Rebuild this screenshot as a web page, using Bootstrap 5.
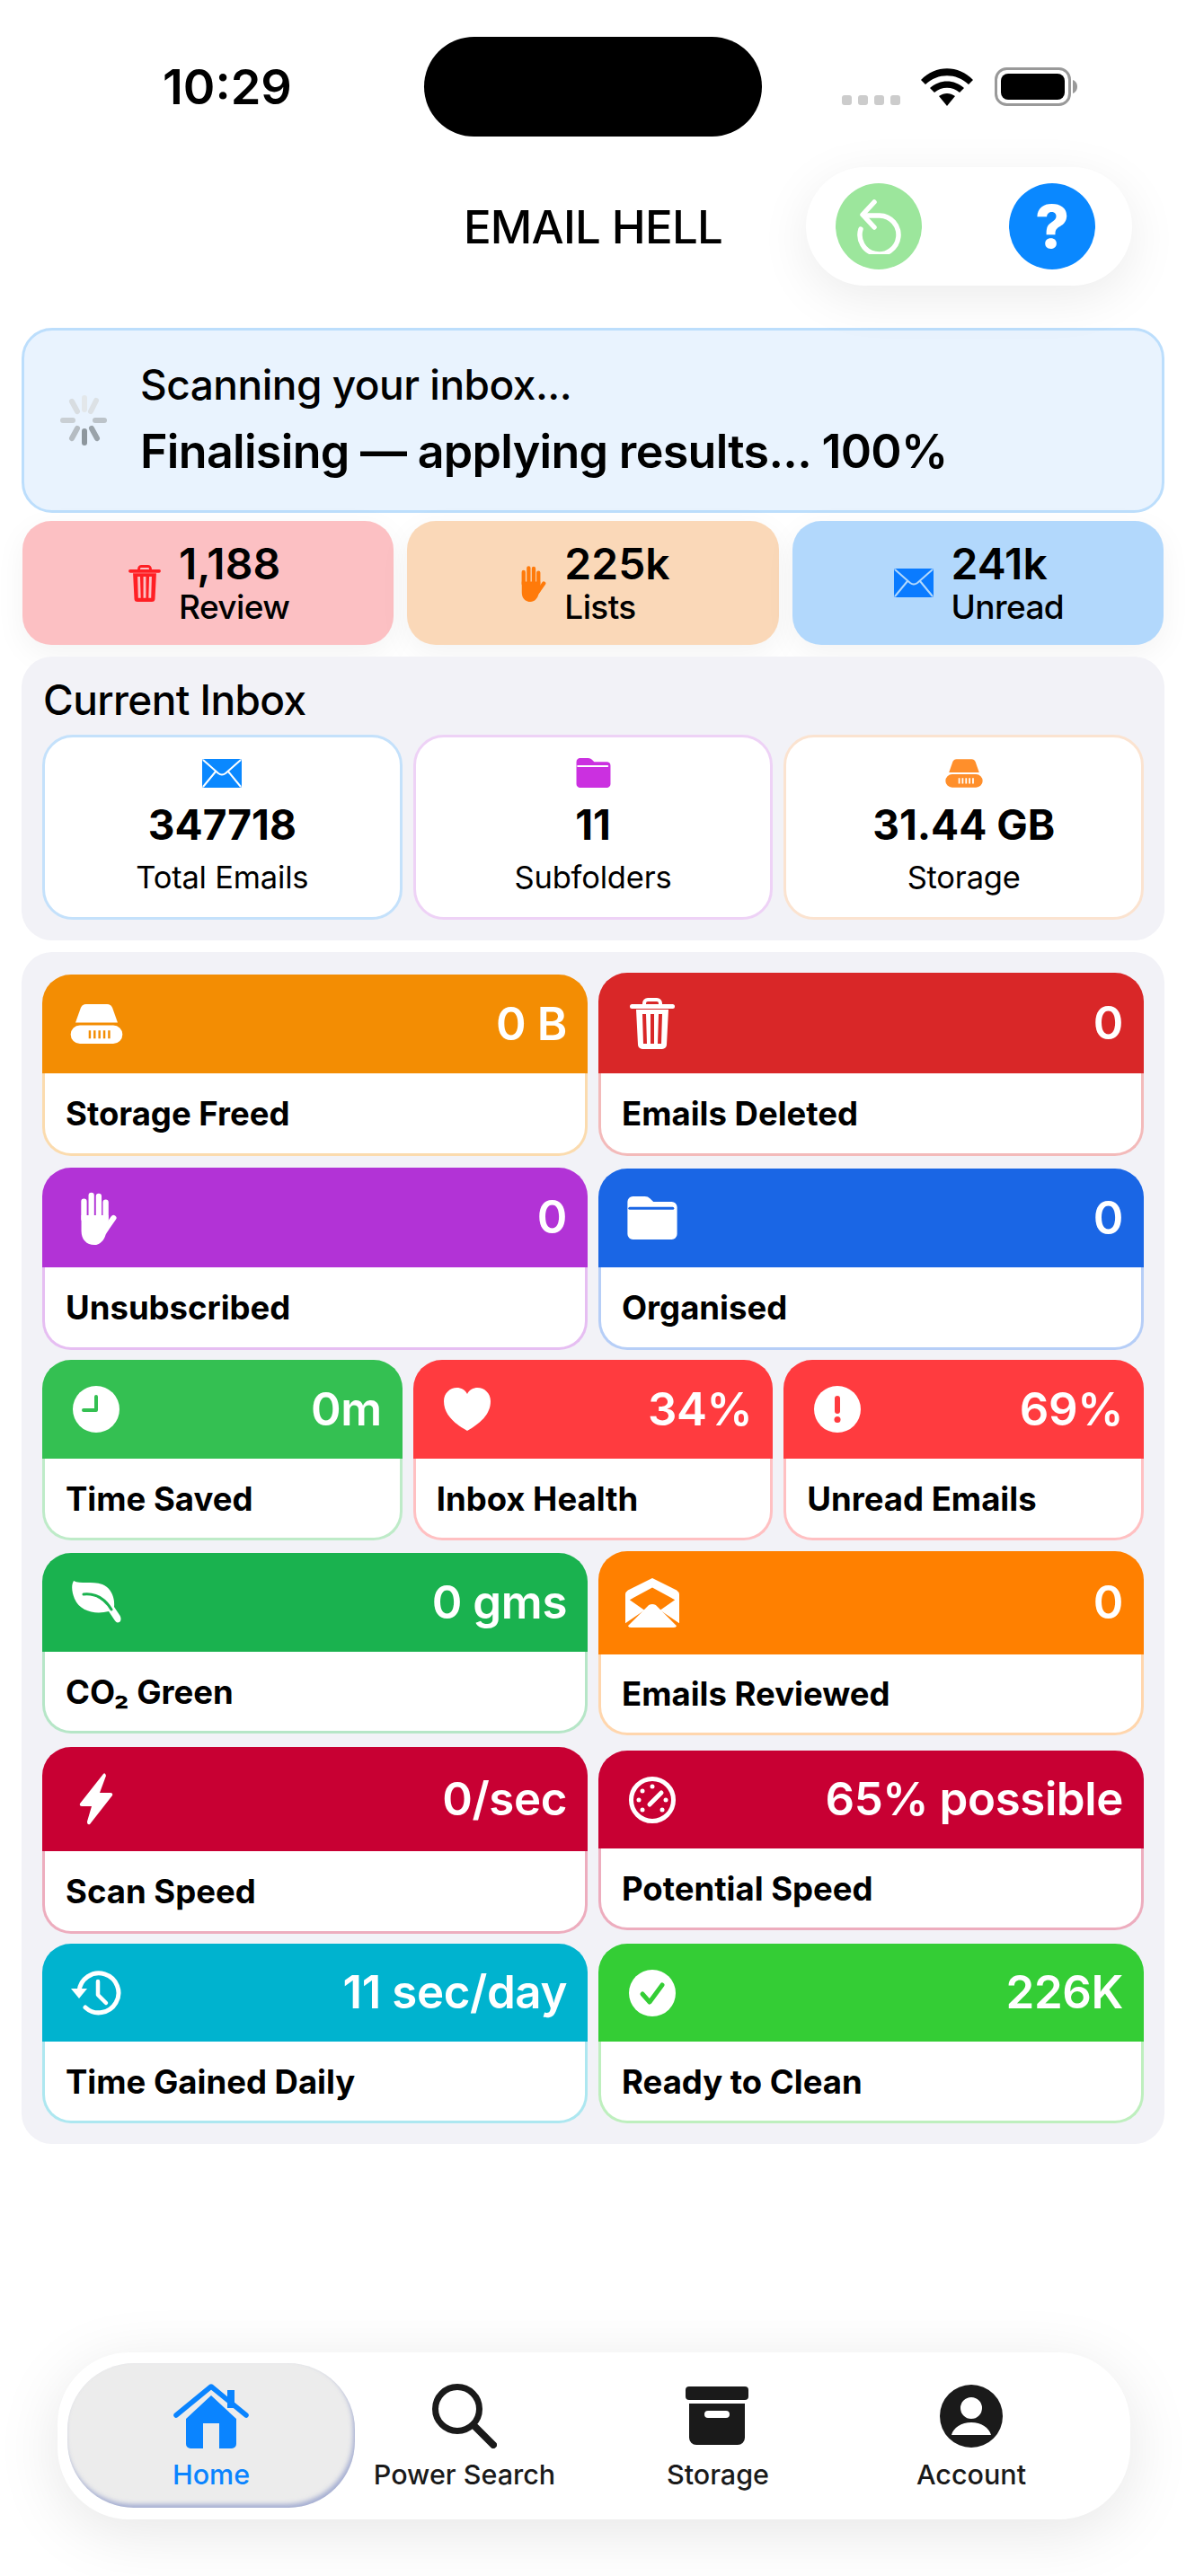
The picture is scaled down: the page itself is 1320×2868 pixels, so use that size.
<!DOCTYPE html>
<html lang="en">
<head>
    <meta charset="UTF-8">
    <title>Email Hell</title>
    <meta name="viewport" content="width=device-width, initial-scale=1">
    <link href="https://cdn.jsdelivr.net/npm/bootstrap@5.3.3/dist/css/bootstrap.min.css" rel="stylesheet">
    <style>
        body { font-family: Inter, "Noto Sans", sans-serif; background: #fff; color: #000; width: 1320px; min-height: 2868px; }
        svg { display: block; fill: currentColor; }
        .status-wrap { height: 111px; margin-top: 41px; }
        .status-left { width: 472px; padding-left: 181px; font-size: 54px; font-weight: 600; }
        .island { width: 376px; height: 111px; background: #000; border-radius: 56px; }
        .status-right { height: 77px; padding-left: 89px; }
        .sig-dot { width: 11px; height: 11px; background: #ccc; border-radius: 3px; }
        .sig-dots { gap: 7px; margin-right: 23px; margin-bottom: 1px; }
        .title-row { display: grid; grid-template-columns: 1fr auto 1fr; align-items: center; margin-top: 34px; padding-right: 60px; }
        .app-title { font-size: 51px; font-weight: 500; letter-spacing: -.8px; padding: 3px 0 0 60px; }
        .pill-top { width: 363px; height: 132px; padding: 0 41px 0 33px; background: #fff; border-radius: 66px; box-shadow: 0 14px 56px rgba(0,0,0,.08); justify-self: end; }
        .round-btn { width: 96px; height: 96px; border-radius: 50%; }
        .round-green { background: #9ce69c; }
        .round-blue { background: #0a88ff; font-size: 66px; font-weight: 800; color: #fff; line-height: 1; }
        .scan-box { height: 206px; margin: 47px 24px 0; padding-left: 39px; background: #e9f3fe; border: 3px solid #bcdefc; border-radius: 34px; }
        .scan-top { font-size: 46px; font-weight: 500; letter-spacing: -.5px; line-height: 1.2; }
        .scan-main { font-size: 52px; font-weight: 600; letter-spacing: -.7px; line-height: 1.2; margin-top: 16px; }
        .spin-wrap { width: 56px; margin-right: 34px; margin-top: -1px; }
        .mini-row { gap: 15px; margin: 9px 25px 0; }
        .mini-tile { flex: 1 1 0; height: 138px; padding-left: 2px; border-radius: 32px; gap: 20px; box-shadow: 0 10px 34px rgba(0,0,0,.05); }
        .mini-red { background: #fcc0c3; color: #ff1f24; }
        .mini-orange { background: #fad8b8; color: #ff7a0a; --cut: #fad8b8; }
        .mini-blue { background: #b2d8fc; color: #0a7bff; --cut: #b2d8fc; }
        .mini-val { font-size: 48px; font-weight: 600; line-height: 54px; color: #000; }
        .mini-lab { font-size: 37px; font-weight: 500; line-height: 42px; color: #000; letter-spacing: -.6px; }
        .panel { position: relative; margin: 13px 24px 0; padding: 23px; background: #f2f2f7; border-radius: 34px; }
        .panel-head { font-size: 46px; font-weight: 500; line-height: 55px; margin: -2px 0 11px 1px; letter-spacing: -.6px; }
        .inbox-row { gap: 12px; }
        .inbox-tile { flex: 1 1 0; height: 206px; background: #fff; border: 3px solid; border-radius: 34px; }
        .inbox-val { font-size: 46px; font-weight: 700; line-height: 56px; margin-top: 13px; }
        .inbox-lab { font-size: 34.5px; font-weight: 400; line-height: 42px; margin-top: 10px; letter-spacing: -.2px; }
        .tile-row { gap: 12px; align-items: center; margin-bottom: 12px; }
        .tile-row:last-child { margin-bottom: 0; }
        .after-11 { margin-bottom: 11px; } .after-13 { margin-bottom: 13px; }
        .tile { flex: 1 1 0; min-width: 0; --cut: var(--c); }
        .tile-head { height: 110px; padding: 0 23px 0 30px; background: var(--c); color: #fff; border-radius: 32px 32px 0 0; }
        .h-109 { height: 109px; } .h-111 { height: 111px; } .h-112 { height: 112px; } .h-115 { height: 115px; } .h-116 { height: 116px; }
        .tile-icon { width: 60px; }
        .tile-val { font-size: 51px; font-weight: 600; letter-spacing: -.4px; white-space: nowrap; }
        .tile-body { height: 91px; padding: 2px 0 0 23px; background: #fff; border: 3px solid color-mix(in srgb, var(--c) 32%, white); border-top: 0; border-radius: 0 0 32px 32px; font-size: 36.5px; font-weight: 700; white-space: nowrap; }
        .b-90 { height: 90px; } .b-92 { height: 92px; }
        .c-orange { --c: #f38d03; } .c-dred { --c: #d92728; } .c-purple { --c: #b233d6; } .c-blue { --c: #1a66e5; }
        .c-green { --c: #34c052; } .c-red { --c: #ff3b3f; } .c-leaf { --c: #1ab24f; } .c-amber { --c: #ff8000; }
        .c-crimson { --c: #c80033; } .c-cyan { --c: #00b3cf; } .c-lime { --c: #34cd35; }
        .bottom-bar { display: grid; grid-template-columns: repeat(4, 282px); width: 1194px; height: 186px; margin: 232px 0 0 64px; padding: 12px 0 0 30px; background: #fff; border-radius: 80px; box-shadow: 0 14px 70px rgba(0,0,0,.1); }
        .tab-item { height: 161px; padding-top: 23px; font-size: 30.5px; font-weight: 500; color: #1a1a1a; }
        .tab-item svg { height: 72px; margin-bottom: 6px; }
        .tab-active { margin: 0 -19px; background: #ececec; color: #0a84ff; border-radius: 74px; box-shadow: inset -2px -4px 5px rgba(110,125,190,.55); }
    </style>
</head>
<body>
    <svg width="0" height="0" class="position-absolute">
        <defs>
            <symbol id="i-mail" viewBox="0 0 44 32"><rect width="44" height="32" rx="2"/><path d="M1 1l17 15q4 3 8 0L43 1M1 31l14-17M43 31L29 14" fill="none" stroke="var(--cut,#fff)" stroke-width="2"/></symbol>
            <symbol id="i-trash" viewBox="0 0 50 57"><path fill-rule="evenodd" d="M7 13h36l-2 39a5 5 0 0 1-5 5H14a5 5 0 0 1-5-5zM14 18l1 33h4l-1-33zM23 18v33h4V18zM32 18l-1 33h4l1-33z"/><rect y="7" width="50" height="5" rx="2.5"/><path d="M16 8V6a4 4 0 0 1 4-4h10a4 4 0 0 1 4 4v2" fill="none" stroke="currentColor" stroke-width="4"/></symbol>
            <symbol id="i-hand" viewBox="0 0 48 62"><path d="M10 32V12M18.500 30V5M27 30V6M35 32V13M35 44l9-13" fill="none" stroke="currentColor" stroke-width="6.500" stroke-linecap="round"/><path d="M7 28h31v17l-3 5c-2 7-7 12-13 12-9 0-15-6-15-16z"/></symbol>
            <symbol id="i-folder" viewBox="0 0 46 40"><path d="M5 0h11q3 0 5 2l3 3h17a5 5 0 0 1 5 5v25a5 5 0 0 1-5 5H5a5 5 0 0 1-5-5V5a5 5 0 0 1 5-5z"/><path d="M2 11h40" stroke="var(--cut,#fff)" stroke-width="2.500" stroke-linecap="round"/></symbol>
            <symbol id="i-drive" viewBox="0 0 60 45"><path d="M18 0h24c3 0 5 2 6 4l6 17H6l6-17c1-2 3-4 6-4z"/><path fill-rule="evenodd" d="M11 24h38a10.500 10.500 0 0 1 0 21H11a10.500 10.500 0 0 1 0-21zM21 30v9h2.500v-9zM26.500 30v9H29v-9zM32 30v9h2.500v-9zM37.500 30v9H40v-9zM43 30v9h2.500v-9z"/></symbol>
            <symbol id="i-clock" viewBox="0 0 52 52"><circle cx="26" cy="26" r="26"/><path d="M26 12v15H12" fill="none" stroke="var(--cut,#fff)" stroke-width="4" stroke-linecap="round" stroke-linejoin="round"/></symbol>
            <symbol id="i-heart" viewBox="0 0 52 48"><path d="M26 48C12 40 0 30 0 15 0 6 7 0 14.500 0 19 0 24 2.500 26 7c2-4.500 7-7 11.500-7C45 0 52 6 52 15c0 15-12 25-26 33z"/></symbol>
            <symbol id="i-alert" viewBox="0 0 52 52"><circle cx="26" cy="26" r="26"/><rect x="23" y="11" width="6" height="20" rx="3" fill="var(--cut,#fff)"/><circle cx="26" cy="37.500" r="3.500" fill="var(--cut,#fff)"/></symbol>
            <symbol id="i-leaf" viewBox="0 0 56 48"><path d="M3 0c7 4 20 0 32 4 10 4 14 15 13 25l6 9c2 3 2 6 0 8-3 1-4 0-6-3l-6-9C27 38 10 34 4 20 1 13 0 5 3 0z"/><path d="M14 15c10-1 22 2 31 17" fill="none" stroke="var(--cut,#fff)" stroke-width="3" stroke-linecap="round"/></symbol>
            <symbol id="i-open" viewBox="0 0 62 58"><path d="M31 0l28 14q3 2 3 5v33l-22-15 17-12-26-14-26 14 17 12L0 52V19q0-3 3-5z"/><path d="M31 30q2 0 4 1l24 24q-1 2-4 2H7q-3 0-4-2l24-24q2-1 4-1z"/></symbol>
            <symbol id="i-bolt" viewBox="0 0 38 58"><path d="M27 1L1 34q-1 3 2 3h11L9 54q0 4 3 3l25-32q1-3-2-3H23l7-19q-1-4-3-2z"/></symbol>
            <symbol id="i-gauge" viewBox="0 0 52 52"><circle cx="26" cy="26" r="23.500" fill="none" stroke="currentColor" stroke-width="5"/><circle cx="26" cy="11" r="2.500"/><circle cx="15" cy="16" r="2.500"/><circle cx="11" cy="26" r="2.500"/><circle cx="15" cy="37" r="2.500"/><circle cx="41" cy="26" r="2.500"/><circle cx="37" cy="37" r="2.500"/><path d="M23 31l13-13" stroke="currentColor" stroke-width="5" stroke-linecap="round"/></symbol>
            <symbol id="i-history" viewBox="0 0 56 52"><path d="M9 24a22 22 0 1 1 7 18" fill="none" stroke="currentColor" stroke-width="5" stroke-linecap="round"/><path d="M0 21h18l-9 11z"/><path d="M30 13v15l9 9" fill="none" stroke="currentColor" stroke-width="4.500" stroke-linecap="round" stroke-linejoin="round"/></symbol>
            <symbol id="i-check" viewBox="0 0 52 52"><circle cx="26" cy="26" r="26"/><path d="M15 27l8 9 14-19" fill="none" stroke="var(--cut,#fff)" stroke-width="5" stroke-linecap="round" stroke-linejoin="round"/></symbol>
            <symbol id="i-home" viewBox="0 0 84 72"><path fill-rule="evenodd" d="M42 13l-28 26v28a5 5 0 0 0 5 5h46a5 5 0 0 0 5-5V39zM33 44h18v28H33z"/><path d="M3 35L42 3l39 32" fill="none" stroke="currentColor" stroke-width="5.500" stroke-linecap="round" stroke-linejoin="round"/><path d="M60 7h8v20h-8z"/></symbol>
            <symbol id="i-search" viewBox="0 0 72 72"><circle cx="28" cy="28" r="24.500" fill="none" stroke="currentColor" stroke-width="7"/><path d="M46 46l22 22" stroke="currentColor" stroke-width="8" stroke-linecap="round"/></symbol>
            <symbol id="i-box" viewBox="0 0 72 72"><rect y="3" width="70" height="15" rx="4"/><path fill-rule="evenodd" d="M4 22h62v38a8 8 0 0 1-8 8H12a8 8 0 0 1-8-8zM25 30a3 3 0 0 0 0 8h20a3 3 0 0 0 0-8z"/></symbol>
            <symbol id="i-user" viewBox="0 0 72 72"><path fill-rule="evenodd" d="M36 1a35 35 0 1 1 0 70 35 35 0 0 1 0-70zM36 15a12 12 0 1 0 0 24 12 12 0 0 0 0-24zM14 57h44c-2-8-11-14-22-14s-20 6-22 14z"/></symbol>
        </defs>
    </svg>

    <div class="status-wrap d-flex">
        <div class="status-left d-flex align-items-center">10:29</div>
        <div class="island"></div>
        <div class="status-right d-flex align-items-end">
            <div class="sig-dots d-flex">
                <span class="sig-dot"></span><span class="sig-dot"></span><span class="sig-dot"></span><span class="sig-dot"></span>
            </div>
            <svg width="58" height="42" viewBox="0 0 58 42"><path d="M0 13C16-4 42-4 58 13l-5 5C39 5 19 5 5 18z"/><path d="M10 22c11-10 27-10 38 0l-5 5c-8-7-20-7-28 0z"/><path d="M20 31c6-4 12-4 18 0L29 42z"/></svg>
            <svg class="ms-4" width="92" height="43" viewBox="0 0 92 43"><rect x="1.500" y="1.500" width="82" height="40" rx="12" fill="none" stroke="#999" stroke-width="3"/><rect x="7" y="7" width="71" height="29" rx="8"/><path d="M87 14c3 1 5 4 5 7.500s-2 6.500-5 7.500z" fill="#999"/></svg>
        </div>
    </div>

    <div class="title-row">
        <div></div>
        <div class="app-title">EMAIL HELL</div>
        <div class="pill-top d-flex align-items-center justify-content-between">
            <div class="round-btn round-green d-flex align-items-center justify-content-center">
                <svg width="52" height="62" viewBox="0 0 52 62"><path d="M6 34a21.500 21.500 0 1 0 21-15H10" fill="none" stroke="#fff" stroke-width="5.500" stroke-linecap="round"/><path d="M21 4L8 18l13 14" fill="none" stroke="#fff" stroke-width="5.500" stroke-linecap="round" stroke-linejoin="round"/></svg>
            </div>
            <div class="round-btn round-blue d-flex align-items-center justify-content-center">?</div>
        </div>
    </div>

    <div class="scan-box d-flex align-items-center">
        <div class="spin-wrap">
            <svg width="56" height="56" viewBox="0 0 56 56" fill="none" stroke-width="6" stroke-linecap="round">
                <path d="M28 3v13" stroke="#e3e7ea"/><path d="M41 6l-6 12" stroke="#dce1e5"/><path d="M50 28H40" stroke="#bcc3c9"/><path d="M42 48l-6-11" stroke="#9aa3aa"/><path d="M28 53V40" stroke="#8d969d"/><path d="M14 48l6-11" stroke="#b5bcc2"/><path d="M4 28h11" stroke="#c9cfd4"/><path d="M14 7l6 11" stroke="#d8dde1"/>
            </svg>
        </div>
        <div>
            <div class="scan-top">Scanning your inbox...</div>
            <div class="scan-main">Finalising — applying results... 100%</div>
        </div>
    </div>

    <div class="mini-row d-flex">
        <div class="mini-tile mini-red d-flex align-items-center justify-content-center">
            <svg width="36" height="41"><use href="#i-trash"/></svg>
            <div><div class="mini-val">1,188</div><div class="mini-lab">Review</div></div>
        </div>
        <div class="mini-tile mini-orange d-flex align-items-center justify-content-center">
            <svg width="32" height="41"><use href="#i-hand"/></svg>
            <div><div class="mini-val">225k</div><div class="mini-lab">Lists</div></div>
        </div>
        <div class="mini-tile mini-blue d-flex align-items-center justify-content-center">
            <svg width="44" height="32"><use href="#i-mail"/></svg>
            <div><div class="mini-val">241k</div><div class="mini-lab">Unread</div></div>
        </div>
    </div>

    <div class="panel">
        <div class="panel-head">Current Inbox</div>
        <div class="inbox-row d-flex">
            <div class="inbox-tile d-flex flex-column align-items-center justify-content-center text-center" style="border-color:#c4e1fb">
                <svg width="44" height="32" style="color:#0a88ff"><use href="#i-mail"/></svg>
                <div class="inbox-val">347718</div>
                <div class="inbox-lab">Total Emails</div>
            </div>
            <div class="inbox-tile d-flex flex-column align-items-center justify-content-center text-center" style="border-color:#eed2f6">
                <svg width="39" height="33" style="color:#cb30e0"><use href="#i-folder"/></svg>
                <div class="inbox-val">11</div>
                <div class="inbox-lab">Subfolders</div>
            </div>
            <div class="inbox-tile d-flex flex-column align-items-center justify-content-center text-center" style="border-color:#fbe3d0">
                <svg width="42" height="32" style="color:#ff8f2b"><use href="#i-drive"/></svg>
                <div class="inbox-val">31.44 GB</div>
                <div class="inbox-lab">Storage</div>
            </div>
        </div>
    </div>

    <div class="panel">
        <div class="tile-row after-13 d-flex">
            <div class="tile c-orange align-self-end">
                <div class="tile-head d-flex align-items-center justify-content-between"><div class="tile-icon d-flex justify-content-center"><svg width="59" height="44"><use href="#i-drive"/></svg></div><div class="tile-val">0 B</div></div>
                <div class="tile-body b-92 d-flex align-items-center">Storage Freed</div>
            </div>
            <div class="tile c-dred">
                <div class="tile-head h-112 d-flex align-items-center justify-content-between"><div class="tile-icon d-flex justify-content-center"><svg width="50" height="57"><use href="#i-trash"/></svg></div><div class="tile-val">0</div></div>
                <div class="tile-body b-92 d-flex align-items-center">Emails Deleted</div>
            </div>
        </div>
        <div class="tile-row after-11 d-flex">
            <div class="tile c-purple">
                <div class="tile-head h-111 d-flex align-items-center justify-content-between"><div class="tile-icon d-flex justify-content-center"><svg width="48" height="60"><use href="#i-hand"/></svg></div><div class="tile-val">0</div></div>
                <div class="tile-body b-92 d-flex align-items-center">Unsubscribed</div>
            </div>
            <div class="tile c-blue align-self-end">
                <div class="tile-head d-flex align-items-center justify-content-between"><div class="tile-icon d-flex justify-content-center"><svg width="58" height="48"><use href="#i-folder"/></svg></div><div class="tile-val">0</div></div>
                <div class="tile-body b-92 d-flex align-items-center">Organised</div>
            </div>
        </div>
        <div class="tile-row d-flex">
            <div class="tile c-green">
                <div class="tile-head d-flex align-items-center justify-content-between"><div class="tile-icon d-flex justify-content-center"><svg width="52" height="52"><use href="#i-clock"/></svg></div><div class="tile-val">0m</div></div>
                <div class="tile-body d-flex align-items-center">Time Saved</div>
            </div>
            <div class="tile c-red">
                <div class="tile-head d-flex align-items-center justify-content-between"><div class="tile-icon d-flex justify-content-center"><svg width="52" height="48"><use href="#i-heart"/></svg></div><div class="tile-val">34%</div></div>
                <div class="tile-body d-flex align-items-center">Inbox Health</div>
            </div>
            <div class="tile c-red">
                <div class="tile-head d-flex align-items-center justify-content-between"><div class="tile-icon d-flex justify-content-center"><svg width="52" height="52"><use href="#i-alert"/></svg></div><div class="tile-val">69%</div></div>
                <div class="tile-body d-flex align-items-center">Unread Emails</div>
            </div>
        </div>
        <div class="tile-row after-13 d-flex">
            <div class="tile c-leaf">
                <div class="tile-head d-flex align-items-center justify-content-between"><div class="tile-icon d-flex justify-content-center"><svg width="56" height="48"><use href="#i-leaf"/></svg></div><div class="tile-val">0 gms</div></div>
                <div class="tile-body d-flex align-items-center">CO₂ Green</div>
            </div>
            <div class="tile c-amber">
                <div class="tile-head h-115 d-flex align-items-center justify-content-between"><div class="tile-icon d-flex justify-content-center"><svg width="62" height="58"><use href="#i-open"/></svg></div><div class="tile-val">0</div></div>
                <div class="tile-body b-90 d-flex align-items-center">Emails Reviewed</div>
            </div>
        </div>
        <div class="tile-row after-11 d-flex">
            <div class="tile c-crimson">
                <div class="tile-head h-116 d-flex align-items-center justify-content-between"><div class="tile-icon d-flex justify-content-center"><svg width="38" height="58"><use href="#i-bolt"/></svg></div><div class="tile-val">0/sec</div></div>
                <div class="tile-body b-92 d-flex align-items-center">Scan Speed</div>
            </div>
            <div class="tile c-crimson">
                <div class="tile-head h-109 d-flex align-items-center justify-content-between"><div class="tile-icon d-flex justify-content-center"><svg width="52" height="52"><use href="#i-gauge"/></svg></div><div class="tile-val">65% possible</div></div>
                <div class="tile-body d-flex align-items-center">Potential Speed</div>
            </div>
        </div>
        <div class="tile-row d-flex">
            <div class="tile c-cyan">
                <div class="tile-head h-109 d-flex align-items-center justify-content-between"><div class="tile-icon d-flex justify-content-center"><svg width="56" height="52"><use href="#i-history"/></svg></div><div class="tile-val">11 sec/day</div></div>
                <div class="tile-body d-flex align-items-center">Time Gained Daily</div>
            </div>
            <div class="tile c-lime">
                <div class="tile-head h-109 d-flex align-items-center justify-content-between"><div class="tile-icon d-flex justify-content-center"><svg width="52" height="52"><use href="#i-check"/></svg></div><div class="tile-val">226K</div></div>
                <div class="tile-body d-flex align-items-center">Ready to Clean</div>
            </div>
        </div>
    </div>

    <nav class="bottom-bar">
        <div class="tab-item tab-active d-flex flex-column align-items-center"><svg width="84" height="72"><use href="#i-home"/></svg>Home</div>
        <div class="tab-item d-flex flex-column align-items-center"><svg width="72" height="72"><use href="#i-search"/></svg>Power Search</div>
        <div class="tab-item d-flex flex-column align-items-center"><svg width="72" height="72"><use href="#i-box"/></svg>Storage</div>
        <div class="tab-item d-flex flex-column align-items-center"><svg width="72" height="72"><use href="#i-user"/></svg>Account</div>
    </nav>

    <script src="https://cdn.jsdelivr.net/npm/bootstrap@5.3.3/dist/js/bootstrap.bundle.min.js"></script>
</body>
</html>
